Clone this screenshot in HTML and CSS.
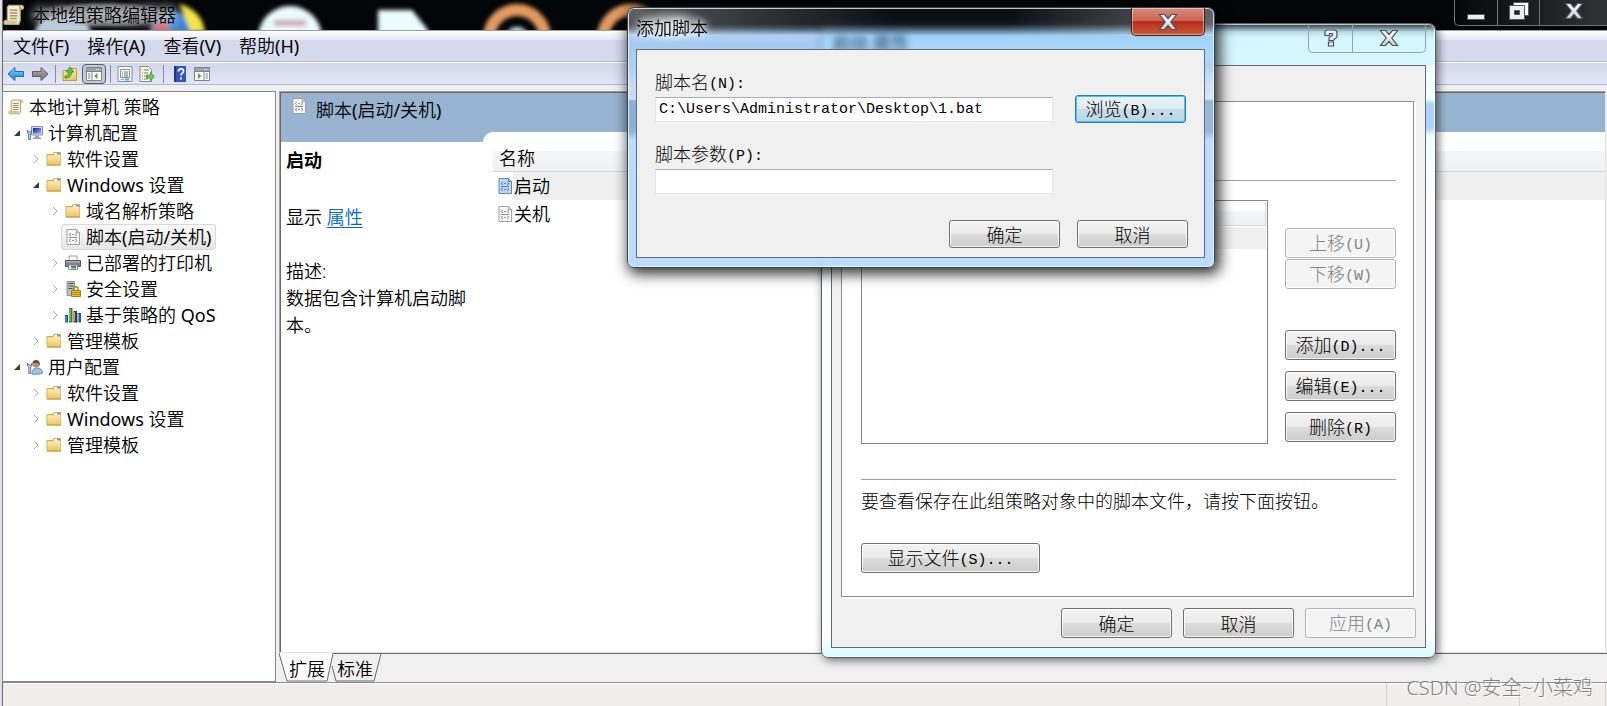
FILE: index.html
```html
<!DOCTYPE html>
<html lang="zh-CN">
<head>
<meta charset="utf-8">
<title>本地组策略编辑器</title>
<link rel="stylesheet" href="styles.css">
</head>
<body>
<svg class="defs" aria-hidden="true">
  <defs>
    <linearGradient id="gFolder" x1="0" y1="0" x2="0" y2="1"><stop offset="0" stop-color="#fdeaaa"/><stop offset="1" stop-color="#ecc566"/></linearGradient>
    <linearGradient id="gScreen" x1="0" y1="0" x2="1" y2="1"><stop offset="0" stop-color="#0a18a8"/><stop offset="1" stop-color="#8fb2ff"/></linearGradient>
    <linearGradient id="gGlyph" x1="0" y1="0" x2="0" y2="1"><stop offset="0" stop-color="#fff"/><stop offset="1" stop-color="#cfcfcf"/></linearGradient>
    <linearGradient id="gBlue" x1="0" y1="0" x2="0" y2="1"><stop offset="0" stop-color="#7fd4fa"/><stop offset="1" stop-color="#1385d0"/></linearGradient>
    <linearGradient id="gGray" x1="0" y1="0" x2="0" y2="1"><stop offset="0" stop-color="#b8b8b8"/><stop offset="1" stop-color="#6c6c6c"/></linearGradient>
    <symbol id="scroll" viewBox="0 0 16 16">
      <path d="M4 1h9.500c1.500 0 1.900 2.600.4 2.800h-1.400V12l-1 2.800H2C.3 14.800.3 12 2 12h1.200V2.500z" fill="#f5edcb" stroke="#b5a678"/>
      <path d="M2 12h8.500l-.5 2.500H2z" fill="#d6c692"/>
      <path d="M5 4.500h5.500M5 6.500h5.500M5 8.500h5.500M5 10.500h5" stroke="#9d9784"/>
      <path d="M12.500 3.800V1.500" stroke="#a08f5d"/>
    </symbol>
    <symbol id="folder" viewBox="0 0 16 16">
      <path d="M1 3.500h6l1-2h6.500v12.500H1z" fill="#e9c46a" stroke="#d3aa50"/>
      <path d="M8.500 2h5.500v2.500H8.500z" fill="#fff"/><path d="M11 2h3v1.500h-3z" fill="#4b9be8"/>
      <path d="M1.500 4.500h13v9h-13z" fill="url(#gFolder)"/>
      <path d="M1 14h14" stroke="#c39a44"/>
    </symbol>
    <symbol id="script" viewBox="0 0 16 16">
      <path d="M2 .5h9.500l3 3v12H2z" fill="#f7f7f7" stroke="#a2a2a2"/>
      <path d="M11.500.5v3h3" fill="#ddd" stroke="#a2a2a2"/>
      <path d="M6 4 4 5.500 6 7M10 4l2 1.500L10 7M6 10l-2 1.500L6 13M10 10l2 1.500L10 13M7 5.500h2M7 11.500h2M4 8.500h8" fill="none" stroke="#777" stroke-width=".8"/>
    </symbol>
    <symbol id="script-sel" viewBox="0 0 16 16">
      <path d="M2 .5h9.500l3 3v12H2z" fill="#b9d8f8" stroke="#6686aa"/>
      <path d="M11.500.5v3h3" fill="#8fb8e0" stroke="#6686aa"/>
      <path d="M6 4 4 5.500 6 7M10 4l2 1.500L10 7M6 10l-2 1.500L6 13M10 10l2 1.500L10 13M7 5.500h2M7 11.500h2M4 8.500h8" fill="none" stroke="#4c6c92" stroke-width=".8"/>
    </symbol>
    <symbol id="computer" viewBox="0 0 16 16">
      <path d="M4.500 1.500h11v8.500h-11z" fill="#d9dde3" stroke="#8a92a0"/>
      <path d="M6 3h8v5.500H6z" fill="url(#gScreen)"/>
      <path d="M8 10.500h4v2H8zM6 12.500h8v1.500H6z" fill="#9aa0aa"/>
      <path d="M.5 5v3l1 1v5.500h2V9l1-1V5l-1 2h-2z" fill="#a9cbe8" stroke="#48759c" stroke-width=".8"/>
    </symbol>
    <symbol id="user" viewBox="0 0 16 16">
      <path d="M5 15c0-4 1.500-6 5-6s5.500 2 5.500 5c0 1-10.500 2-10.500 1z" fill="#9cc4ea" stroke="#5e8fc0"/>
      <circle cx="9" cy="5" r="3.600" fill="#c08f68"/><path d="M5.500 4C6 .5 11.500 0 12.500 3.500L13 7l-2-3z" fill="#5b4a40"/>
      <path d="M.5 4v3l1.200 1v6.500h2V8l1.300-1V4L4 6H2z" fill="#b7cfe4" stroke="#4a6c90" stroke-width=".8"/>
    </symbol>
    <symbol id="printer" viewBox="0 0 16 16">
      <path d="M4 1h8v5H4z" fill="#fafafa" stroke="#999"/>
      <path d="M.5 5.500h15v6H.5z" fill="#7d8187" stroke="#55585e"/>
      <path d="M1 6h14v1.500H1z" fill="#a9adb3"/>
      <path d="M3.500 10h9v4.500h-9z" fill="#fff" stroke="#888"/><path d="M6 10.500h2v3H6z" fill="#47a36b"/><path d="M8 10.500h3v3H8z" fill="#2f7fd0"/>
    </symbol>
    <symbol id="server" viewBox="0 0 16 16">
      <path d="M2 .5h7.500v14H2z" fill="#b6bfc6" stroke="#8a949d"/>
      <path d="M3.500 2.500h5M3.500 5h5M3.500 7.500h4" stroke="#46525e"/>
      <path d="M8.500 10V8c0-3 4.500-3 4.500 0v2" fill="none" stroke="#b18a20" stroke-width="1.500"/>
      <path d="M6.500 9.500h9v6h-9z" fill="#edbf35" stroke="#a77e12"/><path d="M7 11.500h8M7 13.500h8" stroke="#b8860b"/>
    </symbol>
    <symbol id="chart" viewBox="0 0 16 16">
      <path d="M0 8h3v7.500H0z" fill="#0e4f91"/><path d="M4 1h3.500v14.500H4z" fill="#228c28"/><path d="M8.500 4H12v11.500H8.500z" fill="#5c2c22"/><path d="M12.500 6H16v9.500h-3.500z" fill="#0d5fa6"/>
      <path d="M1 9v6M13.500 7v8" stroke="#5cc4ff"/><path d="M5 2v12" stroke="#8ff08a"/><path d="M9.500 5v9" stroke="#f29a72"/>
    </symbol>
    <symbol id="back" viewBox="0 0 18 16"><path d="M1 8l7-6.500v4h8.500v5H8v4z" fill="url(#gBlue)" stroke="#1b6fb3"/></symbol>
    <symbol id="forward" viewBox="0 0 18 16"><path d="M17 8l-7-6.500v4H1.500v5H10v4z" fill="url(#gGray)" stroke="#5d5d5d"/></symbol>
    <symbol id="up" viewBox="0 0 16 16">
      <path d="M1 4.500h7l1-2h5.500v12H1z" fill="url(#gFolder)" stroke="#c79a3a"/>
      <path d="M3 10c3 0 3.500-2 3.500-4H4L8 1l4 5H9.500c0 4-2 6-6.500 6z" fill="#5ec93d" stroke="#2c8b1c" stroke-width=".8"/>
    </symbol>
    <symbol id="pane" viewBox="0 0 16 16">
      <path d="M.5 1.500h15v13H.5z" fill="#fff" stroke="#7c828c"/><path d="M1 2h14v3H1z" fill="#9da3ad"/><path d="M10 3.500h1m1 0h1m1 0h.5" stroke="#fff"/>
      <path d="M1 5.500h14M6 6v8" stroke="#7c828c"/><path d="M2 8h2.500M2 10h2.500M2 12h2.500" stroke="#7c828c"/>
      <path d="M11.500 7v6L8 10z" fill="#3fae2a"/>
    </symbol>
    <symbol id="paneR" viewBox="0 0 16 16">
      <path d="M.5 1.500h15v13H.5z" fill="#fff" stroke="#7c828c"/><path d="M1 2h14v3H1z" fill="#9da3ad"/><path d="M10 3.500h1m1 0h1m1 0h.5" stroke="#fff"/>
      <path d="M1 5.500h14M10 6v8" stroke="#7c828c"/><path d="M11.500 8H14M11.500 10H14M11.500 12H14" stroke="#7c828c"/>
      <path d="M4 7v6l3.500-3z" fill="#3fae2a"/>
    </symbol>
    <symbol id="props" viewBox="0 0 16 16">
      <path d="M1 .5h14v15H1z" fill="#f4f6f8" stroke="#8a919b"/><path d="M3.500 3.500h9v8h-9z" fill="#fff" stroke="#8a919b"/>
      <path d="M5 6h1m1 0h4M5 8h1m1 0h4M5 10h1m1 0h4" stroke="#61718a"/><path d="M4 13.500h3" stroke="#999"/><path d="M8 13.500h4" stroke="#35b4e8" stroke-width="2"/>
    </symbol>
    <symbol id="export" viewBox="0 0 16 16">
      <path d="M1 .5h8.500l3 3v12H1z" fill="#fbf8ea" stroke="#8e8a78"/><path d="M3 4h1m1 0h5M3 7h1m1 0h4M3 10h1m1 0h3M3 13h1m1 0h4" stroke="#7e7a6c"/>
      <path d="M7.500 9h4V6.500l4 4-4 4V12h-4z" fill="#6ccf4c" stroke="#3a962b" stroke-width=".8"/>
    </symbol>
    <symbol id="help" viewBox="0 0 16 16">
      <path d="M2 0h12v16H2z" fill="#3257b8"/><path d="M2 0h2v16H2z" fill="#1c3687"/>
      <path d="M6.500 5.500c0-3.500 5-3.500 5-.5 0 2.200-2.500 2-2.500 4.500M9 11.500v2" fill="none" stroke="#fff" stroke-width="1.800"/>
    </symbol>
    <symbol id="x" viewBox="0 0 20 18"><path d="M1.500 1.500h5L10 5.500l3.500-4h5L12.800 9l5.700 7.500h-5L10 12.500l-3.500 4h-5L7.200 9z" fill="url(#gGlyph)" stroke="#4a5060" stroke-width="1.200"/></symbol>
    <symbol id="qmark" viewBox="0 0 14 18"><path d="M1 6.500V3.500C1 2 2.500 1 4 1h6c2 0 3 1 3 3v3.500c0 2-3.500 2-3.500 4H5v-3l3.500-2v-2h-3v2zM4.500 13h5v4h-5z" fill="#eee" stroke="#4a5060" stroke-width="1.200"/></symbol>
    <symbol id="open" viewBox="0 0 8 8"><path d="M7 1v6H1z" fill="#3a3a3a"/></symbol>
    <symbol id="closed" viewBox="0 0 8 8"><path d="M2 0l4 4-4 4" fill="none" stroke="#aaa"/></symbol>
  </defs>
</svg>

<div class="window">
  <header class="titlebar">
    <svg class="wallpaper" width="700" height="30" aria-hidden="true">
      <defs><filter id="soft" x="-10%" y="-50%" width="120%" height="200%"><feGaussianBlur stdDeviation="2"/></filter></defs>
      <g filter="url(#soft)">
        <ellipse cx="60" cy="34" rx="28" ry="20" fill="#b5cde2"/>
        <circle cx="168" cy="32" r="21" fill="#3b86d8"/><path d="M146 30l14-10 8 12z" fill="#e8563c"/><path d="M176 4c16 4 24 14 26 28h-14z" fill="#f3e64a"/>
        <circle cx="287" cy="38" r="32" fill="#e9fbfb"/><path d="M271 23h32" stroke="#cda6b4" stroke-width="6"/>
        <path d="M375 10h34l16 20v8h-50z" fill="#eafcff"/>
        <circle cx="514" cy="38" r="28" fill="none" stroke="#e39a5f" stroke-width="12"/><circle cx="514" cy="38" r="11" fill="#cfe4f0"/>
        <circle cx="628" cy="38" r="28" fill="none" stroke="#e39a5f" stroke-width="12"/>
      </g>
    </svg>
    <div class="caption"><svg class="app-icon"><use href="#scroll"/></svg><h1>本地组策略编辑器</h1></div>
    <div class="caption-buttons">
      <button aria-label="最小化"><svg width="18" height="18"><path d="M.5 12.500h17v5H.5z" fill="#eee" stroke="#555a68"/></svg></button>
      <button aria-label="还原"><svg width="20" height="18"><path d="M4.500.5h15v13h-15z" fill="#fff" stroke="#555a68"/><path d="M.5 3.500h15v14H.5z" fill="#eee" stroke="#555a68"/><path d="M5.500 8.500h5v4h-5z" fill="#222" stroke="#555a68"/></svg></button>
      <button aria-label="关闭" class="wide"><svg width="20" height="18"><use href="#x"/></svg></button>
    </div>
  </header>

  <nav class="menubar">
    <button>文件<span class="latin">(F)</span></button><button>操作<span class="latin">(A)</span></button><button>查看<span class="latin">(V)</span></button><button>帮助<span class="latin">(H)</span></button>
  </nav>

  <div class="toolbar">
    <button aria-label="后退"><svg class="arrow"><use href="#back"/></svg></button>
    <button aria-label="前进"><svg class="arrow"><use href="#forward"/></svg></button>
    <i class="sep"></i>
    <button aria-label="向上"><svg><use href="#up"/></svg></button>
    <button aria-label="显示控制台树" class="pressed"><svg><use href="#pane"/></svg></button>
    <i class="sep"></i>
    <button aria-label="属性"><svg><use href="#props"/></svg></button>
    <button aria-label="导出列表"><svg><use href="#export"/></svg></button>
    <i class="sep"></i>
    <button aria-label="帮助"><svg><use href="#help"/></svg></button>
    <button aria-label="显示操作窗格"><svg><use href="#paneR"/></svg></button>
  </div>

  <main class="workspace">
    <ul class="tree">
      <li class="root"><svg class="ico"><use href="#scroll"/></svg><span>本地计算机 策略</span></li>
      <li class="l1"><svg class="tw"><use href="#open"/></svg><svg class="ico"><use href="#computer"/></svg><span>计算机配置</span></li>
      <li class="l2"><svg class="tw"><use href="#closed"/></svg><svg class="ico"><use href="#folder"/></svg><span>软件设置</span></li>
      <li class="l2"><svg class="tw"><use href="#open"/></svg><svg class="ico"><use href="#folder"/></svg><span><span class="latin">Windows </span>设置</span></li>
      <li class="l3"><svg class="tw"><use href="#closed"/></svg><svg class="ico"><use href="#folder"/></svg><span>域名解析策略</span></li>
      <li class="l3"><i class="tw"></i><div class="selected"><svg class="ico"><use href="#script"/></svg><span>脚本<span class="latin">(</span>启动<span class="latin">/</span>关机<span class="latin">)</span></span></div></li>
      <li class="l3"><svg class="tw"><use href="#closed"/></svg><svg class="ico"><use href="#printer"/></svg><span>已部署的打印机</span></li>
      <li class="l3"><svg class="tw"><use href="#closed"/></svg><svg class="ico"><use href="#server"/></svg><span>安全设置</span></li>
      <li class="l3"><svg class="tw"><use href="#closed"/></svg><svg class="ico"><use href="#chart"/></svg><span>基于策略的<span class="latin"> QoS</span></span></li>
      <li class="l2"><svg class="tw"><use href="#closed"/></svg><svg class="ico"><use href="#folder"/></svg><span>管理模板</span></li>
      <li class="l1"><svg class="tw"><use href="#open"/></svg><svg class="ico"><use href="#user"/></svg><span>用户配置</span></li>
      <li class="l2"><svg class="tw"><use href="#closed"/></svg><svg class="ico"><use href="#folder"/></svg><span>软件设置</span></li>
      <li class="l2"><svg class="tw"><use href="#closed"/></svg><svg class="ico"><use href="#folder"/></svg><span><span class="latin">Windows </span>设置</span></li>
      <li class="l2"><svg class="tw"><use href="#closed"/></svg><svg class="ico"><use href="#folder"/></svg><span>管理模板</span></li>
    </ul>

    <div class="right">
      <section class="pane">
        <header class="pane-head"><svg class="ico"><use href="#script"/></svg><h2>脚本<span class="latin">(</span>启动<span class="latin">/</span>关机<span class="latin">)</span></h2></header>
        <div class="pane-body">
          <div class="info">
            <h3>启动</h3>
            <p class="show">显示 <a href="#properties">属性</a></p>
            <p>描述:</p>
            <p>数据包含计算机启动脚本。</p>
          </div>
          <div class="list">
            <table>
              <thead><tr><th colspan="2">名称</th></tr></thead>
              <tbody>
                <tr class="hot"><td class="icon-cell"><svg class="ico"><use href="#script-sel"/></svg></td><td>启动</td></tr>
                <tr><td class="icon-cell"><svg class="ico"><use href="#script"/></svg></td><td>关机</td></tr>
              </tbody>
            </table>
          </div>
        </div>
      </section>
      <div class="tabs">
        <svg class="tab-lines" width="108" height="29" aria-hidden="true">
          <path d="M0 0l8 28h40l6-28z" fill="#fff"/>
          <path d="M0 0l8 28h40l6-27.500h48l-7 27.500H57l-4-15" fill="none" stroke="#696969"/>
        </svg>
        <button>扩展</button><button>标准</button>
      </div>
    </div>
  </main>

  <footer class="statusbar"><i></i><i></i><i></i></footer>
</div>

<section class="dialog props" id="properties">
  <header><h2>启动 属性</h2>
    <div class="glass-buttons"><button aria-label="帮助"><svg width="14" height="18"><use href="#qmark"/></svg></button><button aria-label="关闭" class="wide"><svg width="20" height="18"><use href="#x"/></svg></button></div>
  </header>
  <div class="client">
    <div class="page">
      <hr>
      <div class="scripts">
        <div class="listbox"><div class="lb-head"></div><div class="lb-row"></div></div>
        <div class="side">
          <button class="btn" disabled>上移<span class="en">(U)</span></button>
          <button class="btn" disabled>下移<span class="en">(W)</span></button>
          <button class="btn first">添加<span class="en">(D)...</span></button>
          <button class="btn">编辑<span class="en">(E)...</span></button>
          <button class="btn">删除<span class="en">(R)</span></button>
        </div>
      </div>
      <hr class="second">
      <p>要查看保存在此组策略对象中的脚本文件，请按下面按钮。</p>
      <button class="btn files">显示文件<span class="en">(S)...</span></button>
    </div>
    <div class="actions">
      <button class="btn">确定</button><button class="btn">取消</button><button class="btn" disabled>应用<span class="en">(A)</span></button>
    </div>
  </div>
</section>

<section class="dialog add">
  <header><h2>添加脚本</h2><button class="close" aria-label="关闭"><svg width="20" height="18"><use href="#x"/></svg></button></header>
  <form class="client">
    <div class="fields">
      <label for="name">脚本名<span class="en">(N):</span></label>
      <input id="name" type="text" value="C:\Users\Administrator\Desktop\1.bat">
      <button type="button" class="btn focus">浏览<span class="en">(B)...</span></button>
      <label for="args">脚本参数<span class="en">(P):</span></label>
      <input id="args" type="text">
    </div>
    <div class="actions"><button type="button" class="btn">确定</button><button type="button" class="btn">取消</button></div>
  </form>
</section>

<div class="watermark">CSDN @安全~小菜鸡</div>
</body>
</html>
```
FILE: styles.css
```css
* { box-sizing: border-box; }
body {
  margin: 0;
  height: 100vh;
  overflow: hidden;
  position: relative;
  background: #dfe0e6;
  color: #000;
  font: 350 18px/26px "Noto Sans", "Noto Sans CJK SC", sans-serif;
}
h1, h2, h3, p, ul { margin: 0; padding: 0; font-size: 18px; font-weight: inherit; }
button { margin: 0; padding: 0; border: 0; background: none; color: inherit; font: inherit; }
svg { display: block; flex: none; }
.defs { position: absolute; width: 0; height: 0; }
.ico { width: 16px; height: 16px; }
.latin { font-weight: 400; }

/* main window */
.window {
  height: 100%;
  margin-left: 2px;
  border-left: 1px solid #6b6b6b;
  display: flex;
  flex-direction: column;
  background: #f0f0f0;
}
.titlebar {
  flex: none;
  height: 31px;
  position: relative;
  display: flex;
  justify-content: space-between;
  overflow: hidden;
  background: #030508;
  border-bottom: 1px solid #9a9da0;
}
.wallpaper { position: absolute; left: 0; top: 0; }
.caption { position: relative; display: flex; align-items: center; height: 29px; gap: 3px; }
.caption h1 {
  padding: 0 4px;
  background: radial-gradient(closest-side, rgba(200,205,210,.75), rgba(160,165,170,.5) 75%, rgba(120,120,120,0));
  text-shadow: 0 0 8px #ddd, 0 0 12px #ccc;
}
.app-icon { width: 22px; height: 24px; }
.caption-buttons {
  position: relative;
  display: flex;
  height: 26px;
  border: 1px solid #70757a;
  border-top: 0;
  border-right: 0;
  border-radius: 0 0 0 5px;
  background: linear-gradient(90deg, #05070a, #303234);
}
.caption-buttons button { width: 42px; display: grid; place-items: center; padding-bottom: 4px; }
.caption-buttons button + button { border-left: 1px solid #70757a; }
.caption-buttons .wide { width: 68px; }

.menubar {
  flex: none;
  height: 31px;
  display: flex;
  gap: 18px;
  padding: 0 10px;
  background: linear-gradient(#fff, #e4e8f4 9px, #d4d9ec 9px, #d4d9ec);
  border-bottom: 1px solid #b4b6c0;
}
.toolbar {
  flex: none;
  height: 23px;
  display: flex;
  align-items: center;
  gap: 6px;
  padding: 0 4px;
  background: linear-gradient(#d2d7eb, #e2e6f6);
  border-top: 1px solid #fff;
  border-bottom: 1px solid #b0b5cf;
}
.toolbar svg { width: 16px; height: 16px; }
.toolbar .arrow { width: 18px; }
.toolbar .sep { width: 1px; height: 18px; background: #8a8d96; }
.toolbar .sep ~ .sep ~ .sep { margin: 0 2px; }
.toolbar .pressed { padding: 1px 3px; margin: 0 -2px; border: 1px solid #565b66; border-radius: 4px; background: #c5cadb; }

.workspace { flex: 1; min-height: 0; display: flex; gap: 3px; padding-top: 6px; }
.tree {
  flex: 0 0 274px;
  list-style: none;
  padding: 2px 0 0 10px;
  margin-left: -1px;
  background: #fff;
  border: 1px solid #828790;
}
.tree li { display: flex; align-items: center; height: 26px; gap: 5px; margin-left: -5px; }
.tree .tw { width: 8px; height: 8px; margin-right: 1px; }
.tree .l1 { margin-left: 0; }
.tree .l2 { margin-left: 19px; }
.tree .l3 { margin-left: 38px; }
.tree span { line-height: 24px; }
.selected {
  display: flex;
  align-items: center;
  gap: 5px;
  margin-left: -4px;
  padding: 0 3px;
  border: 1px solid #d9d9d9;
  border-radius: 3px;
  background: linear-gradient(#fafafa, #e5e5e5);
}

.right { flex: 1; min-width: 0; display: flex; flex-direction: column; }
.pane {
  flex: 1;
  min-height: 0;
  display: flex;
  flex-direction: column;
  margin-right: 1px;
  border: 1px solid #a0a0a0;
  border-right-color: #e3e3e3;
  border-bottom-color: #e3e3e3;
  box-shadow: inset 1px 1px #696969;
  padding: 1px 0 0 1px;
  background: #fff;
}
.pane-head { flex: none; height: 39px; display: flex; gap: 9px; padding: 5px 10px; background: #99b4d1; }
.pane-head h2 { line-height: 24px; }
.pane-body { flex: 1; display: flex; background: linear-gradient(#99b4d1 10px, #fff 10px); }
.info { flex: 0 0 202px; padding: 15px 12px 0 5px; line-height: 27px; }
.info h3 { font-weight: 700; }
.info .show { margin: 30px 0 27px; }
.info a { color: #0066cc; text-underline-offset: 3px; }
.list { flex: 1; padding: 19px 0 0 10px; background: #fff; border-top-left-radius: 10px; }
table { width: 100%; border-collapse: collapse; }
th {
  height: 20px;
  padding: 0 6px;
  text-align: left;
  vertical-align: top;
  font-weight: inherit;
  line-height: 14px;
  background: linear-gradient(#f5f6f8, #f0f1f3);
  border-bottom: 1px solid #d5d5d5;
}
td { height: 28px; padding: 0 1px; line-height: 28px; }
.icon-cell { width: 20px; padding: 0 0 0 4px; }
.hot td + td { background: #efefef; }

.tabs {
  flex: none;
  height: 29px;
  position: relative;
  display: flex;
  gap: 12px;
  padding: 1px 10px 0;
  border-top: 1px solid #696969;
}
.tab-lines { position: absolute; left: 0; top: -1px; }
.tabs button { position: relative; }
.statusbar {
  flex: none;
  height: 24px;
  display: flex;
  justify-content: flex-end;
  background: #f0edec;
  border-top: 1px solid #8c8c8c;
  box-shadow: inset 0 1px #fff;
  padding-right: 1px;
}
.statusbar i { width: 133px; border-left: 1px solid #d5d2d1; }
.statusbar i + i { width: 86px; }
.statusbar i:last-child { width: 1px; }

/* dialogs */
.dialog {
  position: absolute;
  display: flex;
  flex-direction: column;
  border: 1px solid #33414f;
  border-radius: 7px;
}
.dialog > header { flex: none; display: flex; justify-content: space-between; }
.client { flex: 1; background: #f0f0f0; border: 1px solid #5f6b78; font-family: "Noto Sans CJK SC", sans-serif; font-weight: 300; }
.en { font: 15px/20px "Liberation Mono", monospace; vertical-align: 1px; }
.actions { display: flex; justify-content: flex-end; }
.btn {
  width: 111px;
  height: 30px;
  line-height: 24px;
  border: 1px solid #707070;
  border-radius: 3px;
  background: linear-gradient(#f3f3f3, #ebebeb 48%, #dcdcdc 50%, #cdcdcd);
  box-shadow: inset 0 0 0 1px rgba(255,255,255,.8);
}
.btn:disabled { color: #838383; border-color: #adb2b5; background: #f4f4f4; }
.btn.focus {
  border-color: #2c7cae;
  background: linear-gradient(#ebf4f9, #dcebf2 48%, #c9dde8 50%, #bdd6e2);
  box-shadow: inset 0 0 0 1px #3fc8f5;
}

.props {
  left: 821px;
  top: 23px;
  width: 615px;
  padding: 0 9px 9px;
  background: linear-gradient(#2c3640, #b9dce8 8px, #d4f5fe 14px, #d9f6fe 40px, #f0ffff 45px, #f4ffff 75px, #aed2fb 80px, #aed2fb 104px, #f2ffff 112px, #fff 180px, #fff 610px, #d8fcfc);
  border-color: #566066;
  box-shadow: inset 0 0 0 1px rgba(255,255,255,.7), 2px 2px 10px rgba(0,0,0,.6);
}
.props > header { height: 41px; }
.props h2 { padding: 6px 1px; font-weight: 700; }
.glass-buttons { height: 29px; display: flex; border: 1px solid #8fa4ad; border-top: 0; border-radius: 0 0 5px 5px; }
.glass-buttons button { width: 43px; display: grid; place-items: center; }
.glass-buttons .wide { width: 73px; border-left: 1px solid #8fa4ad; }
.props .client { padding: 35px 11px 9px 9px; }
.page { height: 496px; padding: 78px 17px 0 19px; background: #fff; border: 1px solid #898c95; box-shadow: 2px 2px #fff; }
hr { margin: 0; border: 0; height: 1px; background: #a0a0a0; }
.scripts { display: flex; justify-content: space-between; margin-top: 19px; height: 244px; }
.listbox { width: 407px; border: 1px solid #828790; padding: 1px; }
.lb-head { height: 24px; background: linear-gradient(#fff 9px, #f4f5f7 9px, #f0f1f3); border-bottom: 1px solid #d5d5d5; border-right: 1px solid #d5d5d5; }
.lb-row { height: 22px; margin-top: 1px; background: #efefef; }
.side { padding-top: 28px; display: flex; flex-direction: column; gap: 11px; }
.side .btn:disabled + .btn:disabled { margin-top: -10px; }
.side .first { margin-top: 30px; }
.second { margin-top: 35px; }
.page p { margin: 7px 0 30px; }
.page .files { width: 179px; }
.props .actions { margin: 11px -2px 0; gap: 11px; }

.add {
  left: 627px;
  top: 7px;
  width: 588px;
  padding: 0 9px 9px 8px;
  background:
    linear-gradient(90deg, rgba(255,255,255,.3), rgba(255,255,255,0) 45%, rgba(255,255,255,0) 65%, rgba(255,255,255,.35)) 0 0 / 100% 28px no-repeat,
    linear-gradient(rgba(12,17,24,.9), rgba(12,17,24,.9) 16px, rgba(130,190,245,.6) 28px, rgba(150,200,250,.6) 60px, rgba(212,230,248,.9) 91px, rgba(140,176,215,.9) 93px, rgba(140,176,215,.9) 124px, rgba(182,218,255,.95) 132px);
  -webkit-backdrop-filter: blur(3px);
  backdrop-filter: blur(3px);
  box-shadow: inset 0 0 0 1px rgba(255,255,255,.75), 3px 4px 14px 2px rgba(0,0,0,.8);
}
.add > header { height: 41px; }
.add h2 { height: 34px; padding: 7px 0; background: radial-gradient(closest-side, rgba(255,255,255,.75), rgba(255,255,255,0)); text-shadow: 0 0 6px #fff, 0 0 10px #fff; }
.close {
  width: 74px;
  height: 28px;
  display: grid;
  place-items: center;
  border: 1px solid #4d1712;
  border-top: 0;
  border-radius: 0 0 5px 5px;
  background: linear-gradient(#d88a7c, #cb6454 48%, #b52d18 50%, #c85a3c);
  box-shadow: inset 0 0 0 1px rgba(255,255,255,.45);
}
.add .client { padding: 19px 16px 9px 18px; }
.fields {
  display: grid;
  grid-template-columns: 398px 111px;
  grid-template-rows: 26px 28px 44px 28px;
  column-gap: 22px;
  align-items: center;
}
.fields label { grid-column: 1 / -1; align-self: end; }
.fields input {
  width: 100%;
  height: 25px;
  padding: 0 3px;
  border: 1px solid #e3e6ec;
  border-top-color: #abadb3;
  background: #fff;
  font: 15px/20px "Liberation Mono", monospace;
}
.add .btn { height: 28px; line-height: 22px; }
.add .actions { margin-top: 25px; gap: 17px; }

.watermark {
  position: absolute;
  right: 14px;
  bottom: 5px;
  font-size: 20px;
  font-weight: 300;
  color: #808080;
  text-shadow: 1px 1px #fff;
}
```
